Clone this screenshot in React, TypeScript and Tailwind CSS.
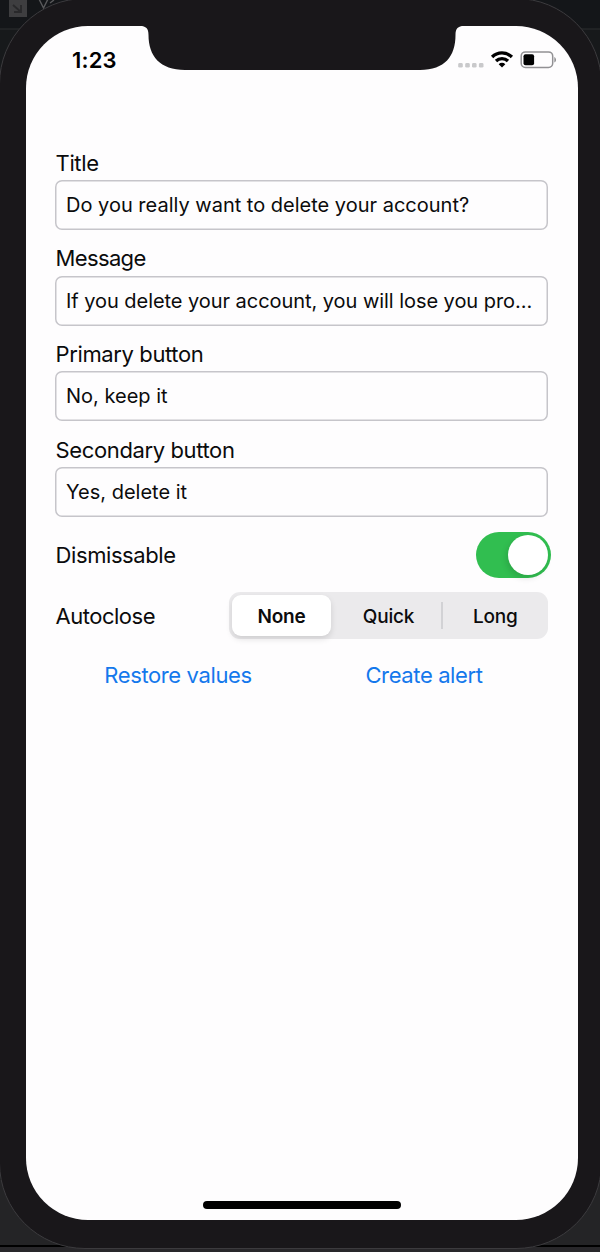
type FieldProps = { label: string; value: string; labelClass?: string; valueClass?: string };

function Field({ label, value, labelClass = "tracking-[-0.38px]", valueClass = "" }: FieldProps) {
  return (
    <div className="h-[95.7px]">
      <div className={`h-[30.3px] whitespace-nowrap pl-[0.6px] pt-px text-[22px] leading-[25px] ${labelClass}`}>{label}</div>
      <div className={`flex h-[50px] w-[493px] items-center whitespace-nowrap rounded-[7px] bg-[#fefdfe] pl-[11px] text-[20px] shadow-[inset_0_0_0_1.500px_#c6c5ca] ${valueClass}`}>
        {value}
      </div>
    </div>
  );
}

function Notch() {
  return (
    <svg className="absolute left-[114px] top-[-1px] h-[46px] w-[324px]" viewBox="0 0 324 46" fill="#19171a">
      <path d="M0 0V1C6 1 8.500 3.500 8.500 10C8.500 31 20 45 45 45H280C305 45 315.500 31 315.500 10C315.500 3.500 318 1 324 1V0Z" />
    </svg>
  );
}

function StatusIcons() {
  return (
    <svg className="absolute left-[430px] top-[22px] h-[24px] w-[104px]" viewBox="456 48 104 24">
      <g fill="#c9c9cb">
        <rect x="458.200" y="63" width="4.600" height="4.600" rx="1.400" />
        <rect x="465.200" y="63" width="4.600" height="4.600" rx="1.400" />
        <rect x="472" y="63" width="4.600" height="4.600" rx="1.400" />
        <rect x="478.900" y="63" width="4.600" height="4.600" rx="1.400" />
      </g>
      <g fill="none" stroke="#000" strokeWidth="3.300">
        <path d="M492.100 57A14 14 0 0 1 511.900 57" />
        <path d="M496 61A8.600 8.600 0 0 1 508 61" />
      </g>
      <path d="M502 67.500L498.700 64.200A4.700 4.700 0 0 1 505.300 64.200Z" />
      <rect x="521.200" y="51.900" width="31.500" height="15.600" rx="4.200" fill="none" stroke="#929194" strokeWidth="1.500" />
      <rect x="523.500" y="54.200" width="10.600" height="11" rx="2" />
      <path d="M554.300 57C556.600 58 556.600 61.600 554.300 62.600Z" fill="#929194" />
    </svg>
  );
}

function BehindWindow() {
  return (
    <svg className="absolute left-0 top-0 h-[1252px] w-[600px]" viewBox="0 0 600 1252">
      <rect y="0" width="600" height="29" fill="#141619" />
      <rect y="28.500" width="600" height="1" fill="#2c2e30" />
      <rect x="9" y="-3" width="18" height="20" fill="#3e3e40" />
      <path d="M13 5L21 12M21 5V12H14" stroke="#29292b" strokeWidth="1.800" fill="none" />
      <path d="M39 -1L43.500 8L48 -1M50 3L54 0" stroke="#59595b" strokeWidth="1.400" fill="none" />
      <rect y="1180" width="600" height="65" fill="#242426" />
      <rect y="1245" width="600" height="2" fill="#000" />
      <rect y="1247" width="600" height="5" fill="#28272a" />
    </svg>
  );
}

export default function App() {
  return (
    <main className="relative h-[1252px] w-[600px] overflow-hidden bg-[#17191b] font-['Inter',sans-serif] text-[#0b0b0c]">
      <BehindWindow />
      <div className="absolute left-[-1px] top-[-2px] h-[1251px] w-[603px] rounded-[86px] border border-[#3c3b3e] bg-[#19171a]">
        <div className="relative ml-[26px] mt-[27px] h-[1194px] w-[551.500px] rounded-[62px] bg-[#fefdfe]">
          <Notch />
          <div className="absolute left-[46px] top-[21px] text-[22px] font-semibold leading-[26px] tracking-[0.2px] text-black">1:23</div>
          <StatusIcons />
          <div className="pl-[29px] pt-[123.700px]">
            <Field label="Title" value="Do you really want to delete your account?" />
            <Field label="Message" labelClass="tracking-[-0.65px]" value="If you delete your account, you will lose you pro..." valueClass="tracking-[-0.05px]" />
            <Field label="Primary button" value="No, keep it" />
            <Field label="Secondary button" value="Yes, delete it" />
            <div className="flex h-[46px] w-[496px] items-center justify-between text-[22px] leading-[25px] tracking-[-0.42px]">
              <span className="pl-[0.6px]">Dismissable</span>
              <button className="flex h-[46px] w-[75px] items-center justify-end rounded-full bg-[#31be50] pr-[3px]" aria-label="Dismissable">
                <span className="size-[40px] rounded-full bg-white shadow-[-2px_3px_6px_rgba(0,0,0,0.12)]" />
              </button>
            </div>
            <div className="mt-[14px] flex h-[47px] w-[493px] items-center justify-between text-[22px] leading-[25px] tracking-[-0.5px]">
              <span className="pl-[0.6px] pt-px">Autoclose</span>
              <div className="flex h-[47px] w-[319px] items-center rounded-[11px] bg-[#ebeaec] p-[3px] text-center text-[19px] font-medium tracking-[-0.2px]">
                <div className="h-[41px] w-[99px] rounded-[9px] bg-white pt-px font-semibold leading-[41px] shadow-[0_3px_6px_rgba(0,0,0,0.12)]">None</div>
                <div className="ml-[2px] w-[108px] pl-[3px] pt-px">Quick</div>
                <div className="h-[27px] w-[1.5px] bg-[#d2d2d5]" />
                <div className="flex-1 pl-[3px] pt-px">Long</div>
              </div>
            </div>
            <div className="mt-[22.5px] flex h-[26px] w-[492px] text-center text-[22px] leading-[26px] tracking-[-0.38px] text-[#1478ec]">
              <button className="w-[246px]">Restore values</button>
              <button className="w-[246px]">Create alert</button>
            </div>
          </div>
          <div className="absolute bottom-[11px] left-[177px] h-[8px] w-[198px] rounded-full bg-black" />
        </div>
      </div>
    </main>
  );
}
